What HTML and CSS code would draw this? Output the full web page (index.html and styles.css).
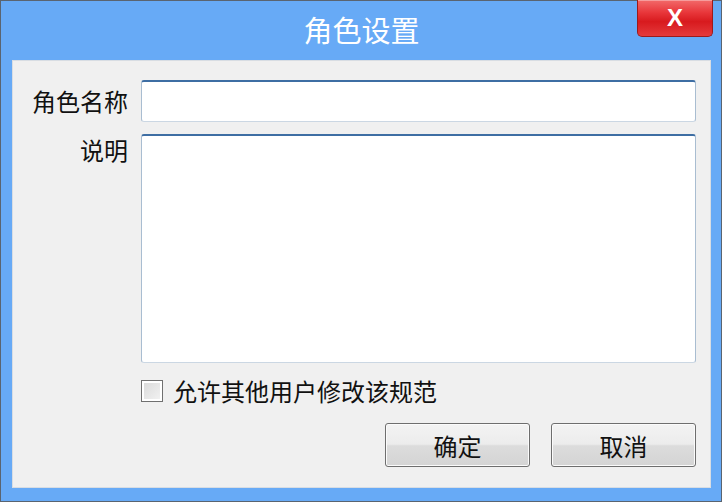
FILE: index.html
```html
<!DOCTYPE html>
<html lang="zh-CN">
<head>
<meta charset="utf-8">
<title>角色设置</title>
<link rel="stylesheet" href="styles.css">
</head>
<body>
<div class="window">
  <div class="titlebar">
    <div class="title">角色设置</div>
    <div class="close">X</div>
  </div>
  <div class="content">
    <div class="form">
      <label class="label label-name">角色名称</label>
      <div class="field input"></div>
      <label class="label label-desc">说明</label>
      <div class="field textarea"></div>
      <div></div>
      <div class="check-row">
        <span class="checkbox"></span>
        <span class="check-text">允许其他用户修改该规范</span>
      </div>
    </div>
    <div class="buttons">
      <div class="btn">确定</div>
      <div class="btn">取消</div>
    </div>
  </div>
</div>
</body>
</html>
```
FILE: styles.css
```css
html, body {
  margin: 0;
  padding: 0;
  width: 722px;
  height: 502px;
  overflow: hidden;
  font-family: "Noto Sans CJK SC", "Noto Sans", sans-serif;
}
.window {
  box-sizing: border-box;
  width: 722px;
  height: 502px;
  border: 1px solid #5a6470;
  background: #67aaf6;
  padding: 0 10px 13px 11px;
  display: flex;
  flex-direction: column;
}
.titlebar {
  position: relative;
  height: 59px;
  flex: none;
  display: flex;
  align-items: center;
  justify-content: center;
}
.title {
  color: #ffffff;
  font-size: 29px;
  line-height: 1;
  margin-top: -2px;
}
.close {
  position: absolute;
  right: -2px;
  top: -1px;
  width: 76px;
  height: 37px;
  box-sizing: border-box;
  border: 1px solid #9c1a1c;
  border-top: none;
  border-radius: 0 0 5px 5px;
  background: linear-gradient(#f26a6a 0%, #e8363a 35%, #d81a1e 60%, #e43a3c 100%);
  box-shadow: inset 0 1px 0 rgba(255,255,255,0.35);
  color: #ffffff;
  font-family: "Liberation Sans", Arial, sans-serif;
  font-weight: bold;
  font-size: 24px;
  display: flex;
  align-items: center;
  justify-content: center;
}
.content {
  flex: 1;
  background: #f0f0f0;
  border: 1px solid #d8dde3;
  padding: 19px 14px 0 0;
  display: flex;
  flex-direction: column;
}
.form {
  display: grid;
  grid-template-columns: 115px 1fr;
  column-gap: 13px;
  row-gap: 12px;
}
.label {
  font-size: 24px;
  color: #111;
  text-align: right;
  line-height: 42px;
}
.label-desc {
  line-height: 32px;
}
.field {
  box-sizing: border-box;
  background: #ffffff;
  border: 1px solid #a9bdd1;
  border-top: 2px solid #3e6ea3;
  border-bottom-color: #cbd7e3;
  border-radius: 3px;
}
.input {
  height: 42px;
}
.textarea {
  height: 229px;
}
.check-row {
  display: flex;
  align-items: center;
  gap: 10px;
  margin-top: 1px;
}
.checkbox {
  box-sizing: border-box;
  width: 22px;
  height: 22px;
  border: 1px solid #707070;
  background: linear-gradient(135deg, #d8d8d8, #f4f4f4);
  box-shadow: inset 0 0 0 2px #ffffff;
}
.check-text {
  font-size: 24px;
  color: #111;
  line-height: 30px;
}
.buttons {
  display: flex;
  justify-content: flex-end;
  gap: 21px;
  margin-top: 17px;
}
.btn {
  box-sizing: border-box;
  width: 145px;
  height: 44px;
  border: 1px solid #6e6e6e;
  border-radius: 3px;
  background: linear-gradient(#f3f3f3 0%, #ececec 48%, #dcdcdc 52%, #d4d4d4 100%);
  box-shadow: inset 0 0 0 1px #fbfbfb;
  font-size: 24px;
  color: #111;
  display: flex;
  align-items: center;
  justify-content: center;
}
```
